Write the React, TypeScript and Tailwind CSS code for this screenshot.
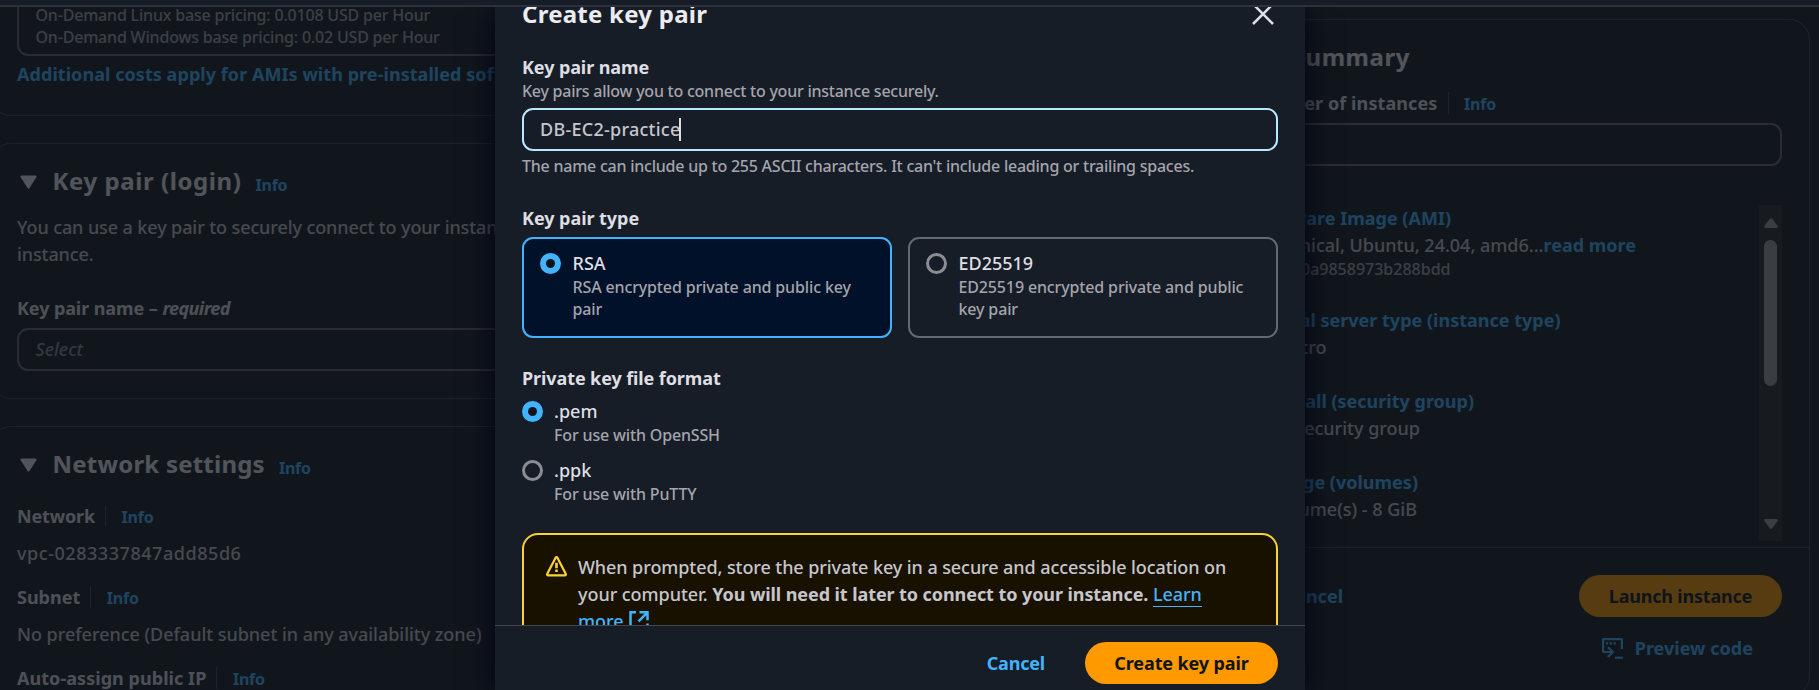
import type { ReactNode } from "react";

function Info() {
  return <a className="relative top-px text-[16px] font-bold leading-[22px] tracking-[-0.2px] text-[#42b4ff]">Info</a>;
}

function LabelRow({ children, className = "" }: { children: ReactNode; className?: string }) {
  return (
    <div className={`flex h-[27px] items-center whitespace-nowrap font-bold text-[#dedee3] ${className}`}>
      {children}
      <span className="mr-[15.5px] ml-[10px] h-[22px] w-px bg-[#424650]" />
      <Info />
    </div>
  );
}

function SectionTitle({ title, tracking }: { title: string; tracking: string }) {
  return (
    <div className="flex h-8 items-baseline whitespace-nowrap">
      <svg className="relative -top-px mr-[16px] ml-[2.5px] h-[14px] w-[17px]" viewBox="0 0 17 14">
        <path d="M1.6.5h13.8c1 0 1.4.9.9 1.7L9.5 13c-.5.8-1.5.8-2 0L.7 2.2C.2 1.4.6.5 1.6.5z" fill="#ebebf0" />
      </svg>
      <h2 className={`text-[24px] leading-8 font-bold text-[#ebebf0] ${tracking}`}>{title}</h2>
      <span className="ml-[14px]">
        <Info />
      </span>
    </div>
  );
}

function Radio({ checked }: { checked?: boolean }) {
  return checked ? (
    <span className="flex size-[21px] shrink-0 items-center justify-center rounded-full bg-[#42b4ff]">
      <span className="size-[9px] rounded-full bg-[#0f141a]" />
    </span>
  ) : (
    <span className="size-[21px] shrink-0 rounded-full border-[3px] border-[#8c8c94]" />
  );
}

function Tile({ checked, title, text }: { checked?: boolean; title: string; text: ReactNode }) {
  return (
    <div
      className={`flex h-[101px] w-[370px] rounded-[11px] border-2 pt-[11px] pl-4 ${
        checked ? "border-[#42b4ff] bg-[#001129]" : "border-[#656871]"
      }`}
    >
      <div className="flex w-[32.5px] pt-[3px]">
        <Radio checked={checked} />
      </div>
      <div className="whitespace-nowrap">
        <div className="text-[#dedee3]">{title}</div>
        <div className="mt-[-1px] text-[16px] leading-[22px] tracking-[-0.14px] text-[#a4a4ad]">{text}</div>
      </div>
    </div>
  );
}

function RadioRow({ checked, title, text }: { checked?: boolean; title: string; text: string }) {
  return (
    <div className="flex h-[49px]">
      <div className="flex w-[32px] pt-[3px]">
        <Radio checked={checked} />
      </div>
      <div className="whitespace-nowrap">
        <div className="text-[#dedee3]">{title}</div>
        <div className="mt-[-0.5px] text-[16px] leading-[22px] tracking-[-0.16px] text-[#a4a4ad]">{text}</div>
      </div>
    </div>
  );
}

function Left() {
  return (
    <section className="ml-[-10px] w-[1230px] shrink-0 whitespace-nowrap">
      <div className="mt-[-3px] h-[112px] rounded-b-[21px] border border-t-0 border-[#424650] pl-[26px]">
        <div className="h-[52px] rounded-b-[11px] border-2 border-t-0 border-[#656871] pl-[16.5px] text-[16px] leading-[22px] tracking-[-0.19px] text-[#a4a4ad]">
          <div>On-Demand Linux base pricing: 0.0108 USD per Hour</div>
          <div>On-Demand Windows base pricing: 0.02 USD per Hour</div>
        </div>
        <a className="mt-[5px] block font-bold tracking-[0.056px] text-[#42b4ff]">
          Additional costs apply for AMIs with pre-installed software
        </a>
      </div>

      <div className="mt-[27px] h-[256px] rounded-[21px] border border-[#424650] pt-[21px] pl-[26px]">
        <SectionTitle title="Key pair (login)" tracking="tracking-[0.57px]" />
        <p className="mt-[16.5px] tracking-[-0.1px]">
          You can use a key pair to securely connect to your instance. Ensure that you have access
          <br />
          instance.
        </p>
        <div className="mt-[27.5px] font-bold text-[#dedee3]">
          <span className="tracking-[-0.1px]">Key pair name</span> – <i className="tracking-[-0.6px]">required</i>
        </div>
        <div className="mt-1.5 flex h-[43px] items-center rounded-[11px] border-2 border-[#656871] pl-[16.5px] text-[#8c8c94] italic">
          Select
        </div>
      </div>

      <div className="mt-[27px] h-[400px] rounded-[21px] border border-[#424650] pt-[21px] pl-[26px]">
        <SectionTitle title="Network settings" tracking="tracking-[0.22px]" />
        <LabelRow className="mt-[22.5px]">
          <span className="tracking-[-0.15px]">Network</span>
        </LabelRow>
        <p className="mt-[10px] tracking-[0.55px]">vpc-0283337847add85d6</p>
        <LabelRow className="mt-[17px]">Subnet</LabelRow>
        <p className="mt-[10px] tracking-[-0.03px]">No preference (Default subnet in any availability zone)</p>
        <LabelRow className="mt-[17px]">
          <span className="tracking-[0.05px]">Auto-assign public IP</span>
        </LabelRow>
      </div>
    </section>
  );
}

function SummaryLink({ children, width, gap = "" }: { children: ReactNode; width: string; gap?: string }) {
  return <div className={`flex justify-end font-bold text-[#42b4ff] ${width} ${gap}`}>{children}</div>;
}

function Summary() {
  return (
    <aside className="mt-3 ml-[14px] h-[678px] w-[570px] shrink-0 rounded-[21px] border border-[#424650] whitespace-nowrap">
      <div className="flex h-[528px] flex-col border-b border-[#424650] pt-[21px] pr-[27px] pl-[23px]">
        <h2 className="flex w-[146px] justify-end text-[24px] leading-8 font-bold tracking-[0.55px] text-[#ebebf0]">Summary</h2>
        <LabelRow className="mt-[16.5px]">
          <span className="flex w-[173.5px] justify-end tracking-[0.1px]">Number of instances</span>
        </LabelRow>
        <div className="mt-[6.5px] h-[43px] w-full rounded-[11px] border-2 border-[#656871]" />
        <div className="mt-[39px] flex h-[336px] justify-between">
          <div>
            <SummaryLink width="w-[187px]">Software Image (AMI)</SummaryLink>
            <div className="flex">
              <span className="flex w-[279.5px] justify-end">Canonical, Ubuntu, 24.04, amd6...</span>
              <a className="font-bold text-[#42b4ff]">read more</a>
            </div>
            <div className="mt-[-1px] flex w-[186.5px] justify-end text-[16px] leading-[22px] text-[#a4a4ad]">
              ami-0f5ee92e0a9858973b288bdd
            </div>
            <SummaryLink width="w-[296.5px]" gap="mt-[27px]">Virtual server type (instance type)</SummaryLink>
            <div className="flex w-[62.5px] justify-end">t3.micro</div>
            <SummaryLink width="w-[210px]" gap="mt-[27px]">Firewall (security group)</SummaryLink>
            <div className="flex w-[156px] justify-end">New security group</div>
            <SummaryLink width="w-[154px]" gap="mt-[27px]">Storage (volumes)</SummaryLink>
            <div className="flex w-[153px] justify-end">1 volume(s) - 8 GiB</div>
          </div>
          <div className="flex w-[23px] flex-col items-center bg-[#2b2b2b]">
            <svg className="mt-[13px] h-[10px] w-[14px]" viewBox="0 0 14 10">
              <path d="M5.8.8c.6-.9 1.8-.9 2.4 0l5.3 7c.6 1 .2 2.2-1 2.2h-11c-1.2 0-1.6-1.2-1-2.2z" fill="#9f9f9f" />
            </svg>
            <div className="mt-3 h-[146px] w-[13px] rounded-full bg-[#9f9f9f]" />
            <svg className="mt-auto mb-[12px] h-[10px] w-[14px]" viewBox="0 0 14 10">
              <path d="M5.8 9.2c.6.9 1.8.9 2.4 0l5.3-7c.6-1 .2-2.2-1-2.2h-11C.3 0-.1 1.2.5 2.2z" fill="#9f9f9f" />
            </svg>
          </div>
        </div>
      </div>
      <div className="flex items-center justify-between pt-[27px] pr-[27px] font-bold">
        <span className="flex w-[102px] shrink-0 justify-end text-[#42b4ff]">Cancel</span>
        <span className="flex h-[42px] w-[203px] shrink-0 items-center justify-center rounded-full bg-[#ff9900] tracking-[-0.2px] text-[#0f141a]">
          Launch instance
        </span>
      </div>
      <div className="mt-[18px] flex h-[27px] items-center justify-end pr-[56px] font-bold text-[#42b4ff]">
        <svg className="mr-3 h-[21px] w-[21px]" viewBox="0 0 21 21" fill="none" stroke="currentColor" strokeWidth="2.2">
          <path d="M19.9 11V1.1H1.1V14h9.5" strokeLinejoin="round" />
          <path d="M6 9.3l4.9 4.7L6 19" />
          <path d="M13 19.7h8" />
          <path d="M4 5.3h2.2M7.8 5.3h2.2M11.6 5.3h2.2" />
        </svg>
        <span className="tracking-[0.02px]">Preview code</span>
      </div>
    </aside>
  );
}

function Modal() {
  return (
    <div className="flex h-[683px] w-[810px] flex-col bg-[#161d26] whitespace-nowrap shadow-[0_5px_27px_1px_#000410]">
      <div className="h-[618px] overflow-hidden px-[27px]">
        <div className="mt-[-9px] flex h-8 justify-between">
          <h1 className="text-[24px] leading-8 font-bold tracking-[0.25px] text-[#ebebf0]">Create key pair</h1>
          <svg className="mt-[5px] mr-[4.5px] h-[22px] w-[22px]" viewBox="0 0 22 22" stroke="#dedee3" strokeWidth="2.5" fill="none">
            <path d="M1 1l20 20M21 1L1 21" />
          </svg>
        </div>
        <div className="mt-[24px] font-bold tracking-[-0.1px] text-[#dedee3]">Key pair name</div>
        <div className="mt-[-1px] text-[16px] leading-[22px] tracking-[-0.24px] text-[#a4a4ad]">
          Key pairs allow you to connect to your instance securely.
        </div>
        <div className="mt-[6px] flex h-[43px] items-center rounded-[11px] border-2 border-[#b8e7ff] pl-4">
          <span className="tracking-[0.25px]">DB-EC2-practice</span>
          <span className="ml-[-1.5px] h-[23px] w-[2px] bg-[#dedee3]" />
        </div>
        <div className="mt-1 text-[16px] leading-[22px] tracking-[-0.235px] text-[#a4a4ad]">
          The name can include up to 255 ASCII characters. It can't include leading or trailing spaces.
        </div>
        <div className="mt-[28px] font-bold tracking-[-0.05px] text-[#dedee3]">Key pair type</div>
        <div className="mt-[5px] flex justify-between">
          <Tile checked title="RSA" text={<>RSA encrypted private and public key<br />pair</>} />
          <Tile title="ED25519" text={<>ED25519 encrypted private and public<br />key pair</>} />
        </div>
        <div className="mt-[26.5px] font-bold tracking-[-0.1px] text-[#dedee3]">Private key file format</div>
        <div className="mt-[6px] flex flex-col gap-[10px]">
          <RadioRow checked title=".pem" text="For use with OpenSSH" />
          <RadioRow title=".ppk" text="For use with PuTTY" />
        </div>
        <div className="mt-[27px] flex h-[140px] rounded-[16px] border-2 border-[#fbd332] bg-[#191100] pt-[19px] pl-[22px]">
          <svg className="mt-[2px] mr-[11px] h-[21px] w-[21px] shrink-0" viewBox="0 0 21 21" fill="none" stroke="#fbd332">
            <path d="M9.6 1.8L1.3 17.8c-.4.8 0 1.5.9 1.5h16.6c.9 0 1.3-.7.9-1.5L11.4 1.8c-.4-.8-1.4-.8-1.8 0z" strokeWidth="2.2" strokeLinejoin="round" />
            <path d="M10.5 6.8v5.4M10.5 13.4V16" strokeWidth="2.6" />
          </svg>
          <div>
            <div className="tracking-[-0.08px]">When prompted, store the private key in a secure and accessible location on</div>
            <div>
              <span className="tracking-[-0.05px]">your computer. </span>
              <b className="font-bold tracking-[-0.08px]">You will need it later to connect to your instance.</b>{" "}
              <a className="border-b border-[#42b4ff] tracking-[-0.1px] text-[#42b4ff]">Learn</a>
            </div>
            <div className="flex text-[#42b4ff]">
              <span>more</span>
              <svg className="mt-[3px] ml-[5px] h-[20px] w-[20px]" viewBox="0 0 20 20" fill="none" stroke="currentColor" strokeWidth="2.5">
                <path d="M7 1.3H1.5v17h17v-5.8" />
                <path d="M10.5 1.3h8v8M18.5 1.3l-9 9" />
              </svg>
            </div>
          </div>
        </div>
      </div>
      <div className="flex h-[65px] items-start justify-end border-t border-[#424650] pt-4 pr-[27px] font-bold">
        <span className="mr-10 flex h-[42px] items-center tracking-[-0.2px] text-[#42b4ff]">Cancel</span>
        <span className="flex h-[42px] w-[193px] items-center justify-center rounded-full bg-[#ff9900] tracking-[-0.12px] text-[#0f141a]">
          Create key pair
        </span>
      </div>
    </div>
  );
}

export default function App() {
  return (
    <div className="flex h-[690px] w-full flex-col overflow-hidden bg-[#161d26] font-['Noto_Sans',sans-serif] text-[18px] leading-[27px] font-medium text-[#c6c6cd]">
      <header className="h-[7px] shrink-0 border-b-2 border-[#2c323d] bg-[#161d26]" />
      <main className="relative flex h-[683px] gap-[6px] overflow-hidden">
        <Left />
        <Summary />
        <div className="absolute inset-0 flex bg-[#0f141ab3] pl-[495px]">
          <Modal />
        </div>
      </main>
    </div>
  );
}
